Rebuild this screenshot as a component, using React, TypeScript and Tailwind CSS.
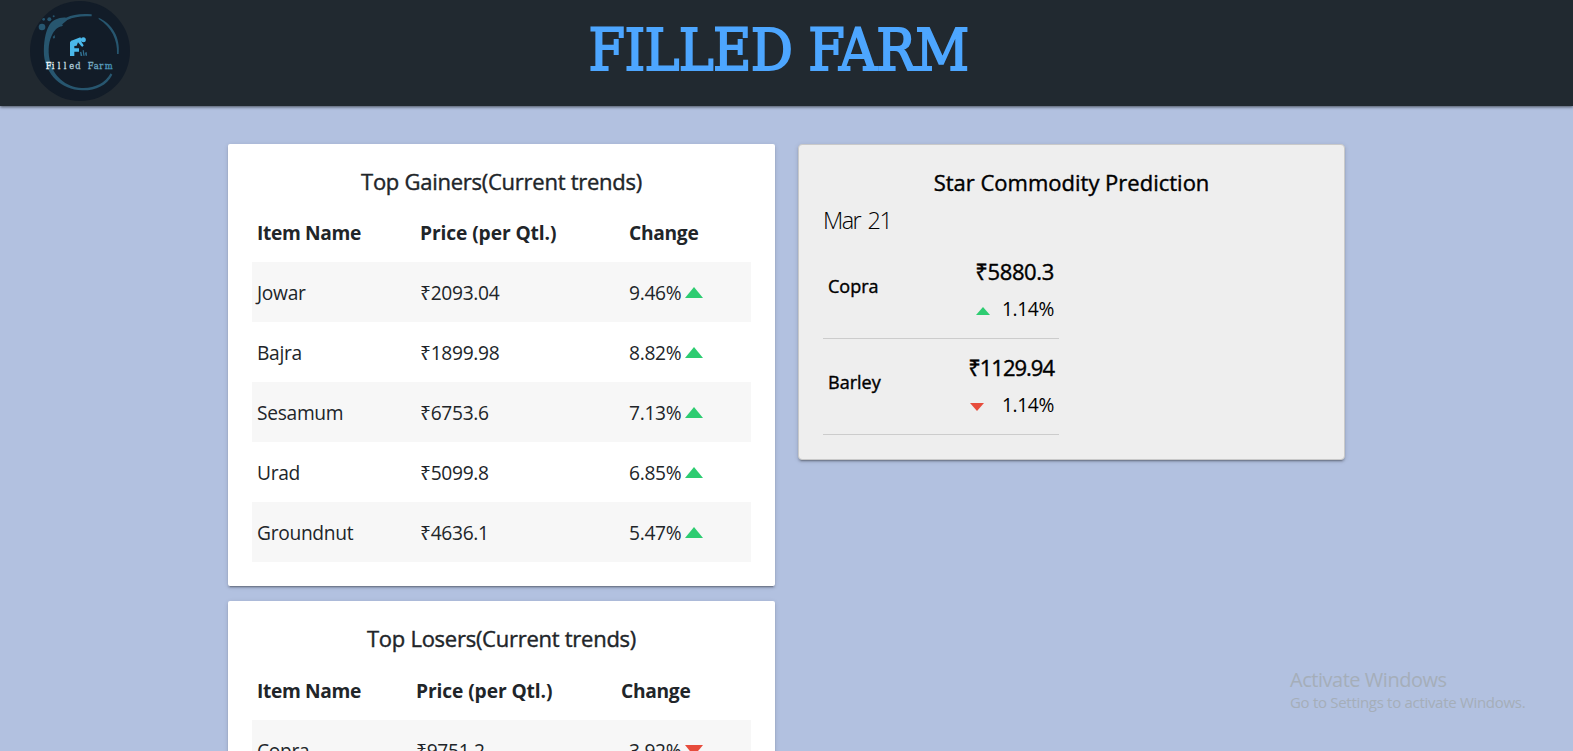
type Trend = "up" | "down";
type Row = { name: string; price: string; change: string };

const gainers: Row[] = [
  { name: "Jowar", price: "₹2093.04", change: "9.46%" },
  { name: "Bajra", price: "₹1899.98", change: "8.82%" },
  { name: "Sesamum", price: "₹6753.6", change: "7.13%" },
  { name: "Urad", price: "₹5099.8", change: "6.85%" },
  { name: "Groundnut", price: "₹4636.1", change: "5.47%" },
];

const losers: Row[] = [{ name: "Copra", price: "₹9751.2", change: "3.92%" }];

function Triangle({ trend, className }: { trend: Trend; className: string }) {
  return (
    <svg className={className} viewBox="0 0 18 10" preserveAspectRatio="none" aria-hidden="true">
      {trend === "up" ? (
        <path d="M9 0 18 10H0Z" fill="#2ecc71" />
      ) : (
        <path d="M0 0H18L9 10Z" fill="#e74c3c" />
      )}
    </svg>
  );
}

function Logo() {
  return (
    <svg className="h-[100px] w-[100px] shrink-0" viewBox="30 3 300 300" role="img" aria-label="Filled Farm">
      <defs>
        <linearGradient id="word" gradientUnits="userSpaceOnUse" x1="77" x2="275" y1="0" y2="0">
          <stop offset="0" stopColor="#ffffff" />
          <stop offset="0.45" stopColor="#a9c6d6" />
          <stop offset="1" stopColor="#3f8fb8" />
        </linearGradient>
      </defs>
      <circle cx="180" cy="153" r="150" fill="#121c28" />
      <g fill="#27566f">
        <path d="M215 43C180 40 160 44 138 53C118 51 98 60 88 75C76 95 70 128 72 166C77 222 124 270 186 271C226 272 260 257 277 224L272 220C254 250 226 265 186 264C136 262 98 226 89 180C83 150 86 122 99 99C105 90 114 80 126 79L130 74L125 74L142 60C162 50 186 47 215 49Z" />
        <path d="M236 53C278 72 301 113 296 162H291C293 120 275 82 236 57Z" />
        <circle cx="66" cy="81" r="10" />
        <circle cx="88" cy="58" r="6" />
        <circle cx="71" cy="58" r="4" />
        <circle cx="101" cy="49" r="3" />
        <path d="M104 105 105 113 101 116 98 111Z" />
      </g>
      <g fill="#4ab8ea">
        <circle cx="190" cy="119" r="7.5" />
        <path d="M150 127Q152 121 160 120L181 112 184 117 183 124 191 136 188 140 184 139 174 127 170 137 163 138V145H177V155H163V168H150Z" />
        <path d="M180 156 184 155 187 168H182ZM188 151 191 150 194 167H190ZM195 158 200 156 201 167H197Z" opacity="0.55" />
      </g>
      <text
        x="77 95.5 113.5 131.5 148 166 184 203 221 238 254"
        y="207"
        fontSize="25"
        stroke="url(#word)"
        strokeWidth="0.8"
        fill="url(#word)"
        className="font-['DejaVu_Serif',serif]"
      >
        Filled Farm
      </text>
    </svg>
  );
}

function TrendCard({
  title,
  rows,
  trend,
  columns,
  headerRow,
  changeCell,
}: {
  title: string;
  rows: Row[];
  trend: Trend;
  columns: string;
  headerRow: string;
  changeCell: string;
}) {
  return (
    <section className="rounded-[2px] bg-white px-6 pt-[23px] pb-6 text-[#212529] shadow-[0_3px_1px_-2px_rgba(0,0,0,0.2),0_2px_2px_0_rgba(0,0,0,0.14),0_1px_5px_0_rgba(0,0,0,0.12)]">
      <h2 className="h-[35px] text-center text-[22px] leading-[28px] tracking-[-0.26px] [-webkit-text-stroke:0.4px]">
        {title}
      </h2>
      <div className={`grid items-center text-[19.2px] font-bold tracking-[-0.3px] ${headerRow} ${columns}`}>
        <span className="tracking-[-0.35px]">Item Name</span>
        <span className="tracking-[-0.1px]">Price (per Qtl.)</span>
        <span>Change</span>
      </div>
      {rows.map((r) => (
        <div
          key={r.name}
          className={`grid h-[60px] items-center pt-0.5 text-[19.2px] tracking-[-0.3px] odd:bg-[#f7f7f7] ${columns}`}
        >
          <span>{r.name}</span>
          <span>{r.price}</span>
          <span className={`flex items-center ${changeCell}`}>
            {r.change}
            <Triangle trend={trend} className="mb-px ml-1 h-[11px] w-[18px]" />
          </span>
        </div>
      ))}
    </section>
  );
}

export default function App() {
  return (
    <div className="relative h-[751px] overflow-hidden bg-[#b2c1e0] font-['Open_Sans','Noto_Sans',sans-serif]">
      <header className="grid h-[106px] grid-cols-[1fr_auto_1fr] items-center bg-[#212930] pl-[30px] shadow-[0_1px_3px_rgba(0,0,0,0.6)]">
        <div className="-mt-1">
          <Logo />
        </div>
        <h1 className="-mt-1.5 mr-[46px] font-['DejaVu_Serif_Condensed','DejaVu_Serif',serif] text-[58.5px] leading-none tracking-[-0.7px] text-[#4da6ff] [-webkit-text-stroke:1.8px_#4da6ff]">
          FILLED FARM
        </h1>
        <div />
      </header>

      <main className="grid grid-cols-[547px_547px] items-start gap-[23px] pt-[38px] pl-[228px]">
        <div className="flex flex-col gap-[15px]">
          <TrendCard
            title="Top Gainers(Current trends)"
            rows={gainers}
            trend="up"
            columns="grid-cols-[163px_209px_1fr] pl-[5px]"
            headerRow="h-[60px] pt-0.5"
            changeCell=""
          />
          <TrendCard
            title="Top Losers(Current trends)"
            rows={losers}
            trend="down"
            columns="grid-cols-[159px_205px_1fr] pl-[5px]"
            headerRow="h-[61px] pt-[3px]"
            changeCell="pl-2"
          />
        </div>

        <section className="h-[316px] rounded-[4px] border border-[#c9c9c9] bg-[#eeeeee] px-6 pt-[23px] text-black shadow-[0_3px_1px_-2px_rgba(0,0,0,0.2),0_2px_2px_0_rgba(0,0,0,0.14),0_1px_5px_0_rgba(0,0,0,0.12)]">
          <h2 className="text-center text-[22px] leading-[28px] [-webkit-text-stroke:0.4px]">
            Star Commodity Prediction
          </h2>
          <p className="mt-2 text-[23.5px] leading-[32px] font-light tracking-[-1.6px] [word-spacing:3px]">Mar 21</p>
          <div className="mt-[7px] w-[236px]">
            <div className="flex h-[96px] items-center justify-between border-b border-[#cccccc] pr-[5px] pl-[5px]">
              <span className="-mt-2 text-[18px] [-webkit-text-stroke:0.4px]">Copra</span>
              <div className="flex flex-col items-end gap-0.5">
                <span className="text-[22px] leading-[34px] tracking-[-0.35px] [-webkit-text-stroke:0.4px]">₹5880.3</span>
                <span className="flex items-center text-[19.2px] leading-[38px] tracking-[-0.35px]">
                  <Triangle trend="up" className="mt-[5px] mr-3 h-2 w-[14px]" />
                  1.14%
                </span>
              </div>
            </div>
            <div className="flex h-[96px] items-center justify-between border-b border-[#cccccc] pr-[5px] pl-[5px]">
              <span className="-mt-2 text-[18px] [-webkit-text-stroke:0.4px]">Barley</span>
              <div className="flex flex-col items-end gap-0.5">
                <span className="text-[22px] leading-[34px] tracking-[-1px] [-webkit-text-stroke:0.4px]">₹1129.94</span>
                <span className="flex items-center text-[19.2px] leading-[38px] tracking-[-0.35px]">
                  <Triangle trend="down" className="mt-[5px] mr-[18px] h-2 w-[14px]" />
                  1.14%
                </span>
              </div>
            </div>
          </div>
        </section>
      </main>

      <aside className="absolute top-[667px] left-[1290px] whitespace-nowrap text-[#a5aeb9]">
        <p className="text-[20px] leading-[26px] tracking-[-0.47px]">Activate Windows</p>
        <p className="-mt-px text-[15px] leading-[20px] tracking-[-0.3px]">Go to Settings to activate Windows.</p>
      </aside>
    </div>
  );
}
